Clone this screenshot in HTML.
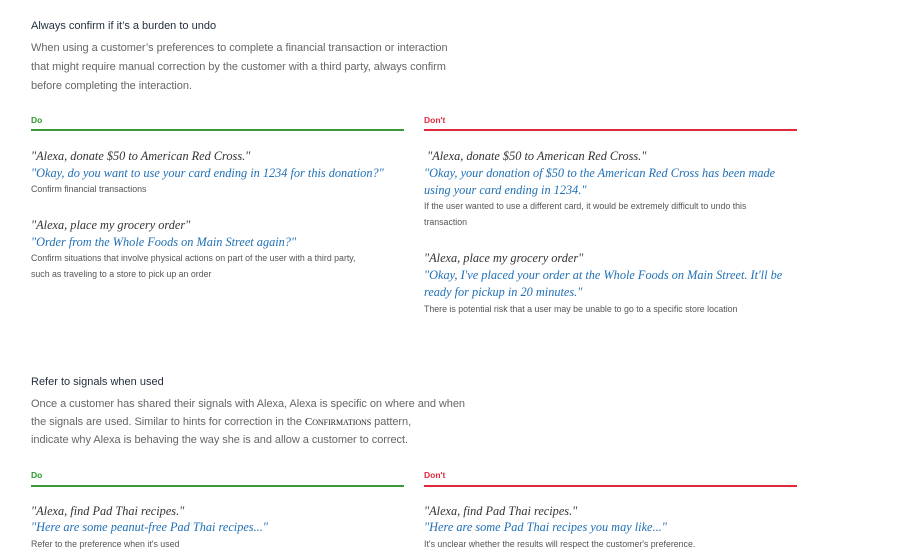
<!DOCTYPE html>
<html><head><meta charset="utf-8"><style>
body{margin:0;width:900px;height:554px;background:#fff;position:relative;overflow:hidden;font-family:"Liberation Sans",sans-serif}
.a{position:absolute;white-space:nowrap;line-height:16px}
.t{font-size:11px;color:#232f3e}
.b{font-size:11px;color:#666;letter-spacing:-0.05px}
.do{font-size:8.5px;font-weight:bold;color:#2a9a2a}
.dn{font-size:8.5px;font-weight:bold;color:#e3283c}
.q{font-family:"Liberation Serif",serif;font-style:italic;font-size:12.3px;color:#333}
.r{font-family:"Liberation Serif",serif;font-style:italic;font-size:12.3px;color:#1f6fb5}
.c{font-size:8.8px;color:#555}
.lg{position:absolute;height:2px;background:#3a9a3a;width:373px;left:31px}
.lr{position:absolute;height:2px;background:#e3283c;width:373px;left:424px}
.sc{font-family:"Liberation Serif",serif;font-variant:small-caps;color:#222;font-size:11px}
</style></head><body>
<div class="a t" style="left:31px;top:18px">Always confirm if it’s a burden to undo</div>
<div class="a b" style="left:31px;top:40px">When using a customer’s preferences to complete a financial transaction or interaction</div>
<div class="a b" style="left:31px;top:59px">that might require manual correction by the customer with a third party, always confirm</div>
<div class="a b" style="left:31px;top:78px">before completing the interaction.</div>

<div class="a do" style="left:31px;top:112px">Do</div>
<div class="lg" style="top:129px"></div>
<div class="a dn" style="left:424px;top:112px">Don't</div>
<div class="lr" style="top:129px"></div>

<div class="a q" style="left:31px;top:148px">"Alexa, donate $50 to American Red Cross."</div>
<div class="a r" style="left:31px;top:165px">"Okay, do you want to use your card ending in 1234 for this donation?"</div>
<div class="a c" style="left:31px;top:181px">Confirm financial transactions</div>
<div class="a q" style="left:31px;top:217px">"Alexa, place my grocery order"</div>
<div class="a r" style="left:31px;top:234px">"Order from the Whole Foods on Main Street again?"</div>
<div class="a c" style="left:31px;top:250px">Confirm situations that involve physical actions on part of the user with a third party,</div>
<div class="a c" style="left:31px;top:266px">such as traveling to a store to pick up an order</div>

<div class="a q" style="left:424px;top:148px">&nbsp;"Alexa, donate $50 to American Red Cross."</div>
<div class="a r" style="left:424px;top:165px">"Okay, your donation of $50 to the American Red Cross has been made</div>
<div class="a r" style="left:424px;top:182px">using your card ending in 1234."</div>
<div class="a c" style="left:424px;top:198px">If the user wanted to use a different card, it would be extremely difficult to undo this</div>
<div class="a c" style="left:424px;top:214px">transaction</div>
<div class="a q" style="left:424px;top:250px">"Alexa, place my grocery order"</div>
<div class="a r" style="left:424px;top:267px">"Okay, I've placed your order at the Whole Foods on Main Street. It'll be</div>
<div class="a r" style="left:424px;top:284px">ready for pickup in 20 minutes."</div>
<div class="a c" style="left:424px;top:301px">There is potential risk that a user may be unable to go to a specific store location</div>

<div class="a t" style="left:31px;top:374px">Refer to signals when used</div>
<div class="a b" style="left:31px;top:396px">Once a customer has shared their signals with Alexa, Alexa is specific on where and when</div>
<div class="a b" style="left:31px;top:414px">the signals are used. Similar to hints for correction in the <span class="sc">Confirmations</span> pattern,</div>
<div class="a b" style="left:31px;top:432px">indicate why Alexa is behaving the way she is and allow a customer to correct.</div>

<div class="a do" style="left:31px;top:467px">Do</div>
<div class="lg" style="top:485px"></div>
<div class="a dn" style="left:424px;top:467px">Don't</div>
<div class="lr" style="top:485px"></div>

<div class="a q" style="left:31px;top:503px">"Alexa, find Pad Thai recipes."</div>
<div class="a r" style="left:31px;top:519px">"Here are some peanut-free Pad Thai recipes..."</div>
<div class="a c" style="left:31px;top:536px">Refer to the preference when it's used</div>
<div class="a q" style="left:424px;top:503px">"Alexa, find Pad Thai recipes."</div>
<div class="a r" style="left:424px;top:519px">"Here are some Pad Thai recipes you may like..."</div>
<div class="a c" style="left:424px;top:536px">It's unclear whether the results will respect the customer's preference.</div>
</body></html>
